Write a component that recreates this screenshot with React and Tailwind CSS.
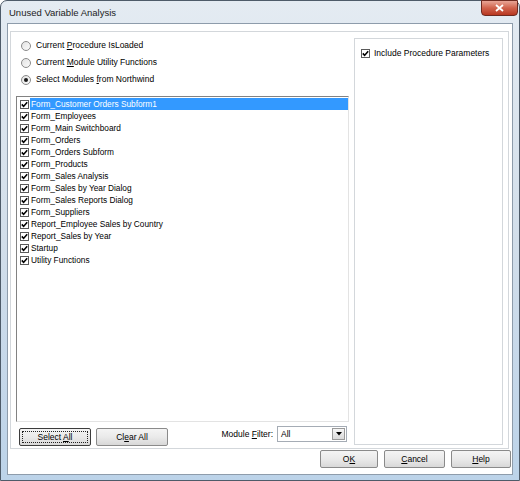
import React from "react";

const modules = [
  "Form_Customer Orders Subform1",
  "Form_Employees",
  "Form_Main Switchboard",
  "Form_Orders",
  "Form_Orders Subform",
  "Form_Products",
  "Form_Sales Analysis",
  "Form_Sales by Year Dialog",
  "Form_Sales Reports Dialog",
  "Form_Suppliers",
  "Report_Employee Sales by Country",
  "Report_Sales by Year",
  "Startup",
  "Utility Functions",
];

function CheckBox({ checked = true }) {
  return (
    <span className="flex w-[9px] h-[9px] shrink-0 items-center justify-center border border-[#5a5a5a] bg-white">
      {checked && (
        <svg width="7" height="7" viewBox="0 0 7 7">
          <polyline points="0.8,3.4 2.6,5.4 6.2,1.2" fill="none" stroke="#000" strokeWidth="1.6" />
        </svg>
      )}
    </span>
  );
}

function Radio({ selected, children }) {
  return (
    <div className="h-[17px] flex items-center gap-[5px]">
      <span className="flex w-[10px] h-[10px] items-center justify-center rounded-full border border-[#8a8a8a] bg-gradient-to-br from-[#e2e2e2] to-[#fbfbfb]">
        {selected && <span className="w-[4px] h-[4px] rounded-full bg-[#1a1a1a]" />}
      </span>
      <span>{children}</span>
    </div>
  );
}

function Button({ children, width, focused }) {
  return (
    <button
      className={`${width} h-[18px] rounded-[2px] border ${
        focused ? "border-[#3c3c3c]" : "border-[#8a8a8a]"
      } bg-gradient-to-b from-[#f4f4f4] via-[#eaeaea] to-[#d8d8d8] p-[2px] text-[8.5px] leading-none`}
    >
      <span
        className={`flex h-full w-full items-center justify-center ${
          focused ? "border border-dotted border-[#222]" : ""
        }`}
      >
        <span>{children}</span>
      </span>
    </button>
  );
}

export default function App() {
  return (
    <div className="w-[520px] h-[481px] font-['Liberation_Sans',Arial,sans-serif] text-[8.5px] text-black">
      <div className="w-full h-full flex flex-col rounded-t-[7px] border border-[#4e5b69] bg-gradient-to-b from-[#e4ebf2] via-[#d2deea] to-[#bcd3e9]">
        {/* Title bar */}
        <div className="h-[22px] flex items-start">
          <span className="pl-[8px] pt-[5px] text-[9.5px] text-[#1c1c1c]">Unused Variable Analysis</span>
          <button className="ml-auto mr-[1px] mt-[-1px] w-[37px] h-[16px] rounded-b-[4px] border border-[#6e2a20] bg-gradient-to-b from-[#e8a596] via-[#d0624c] to-[#b8361f] flex items-center justify-center">
            <svg width="9" height="8" viewBox="0 0 9 8">
              <path d="M1 1L8 7M8 1L1 7" stroke="#fff" strokeWidth="1.8" />
            </svg>
          </button>
        </div>

        {/* Client area */}
        <div className="flex-1 mx-[6px] mb-[5px] bg-white border border-[#8e9cab] flex flex-col">
          <div className="mt-[7px] ml-[2px] w-[499px] h-[418px] border border-[#d3d7db] flex">
            {/* Left column */}
            <div className="w-[343px] pl-[5px] flex flex-col">
              <div className="pt-[5px] pl-[5px]">
                <Radio>
                  Current <u>P</u>rocedure IsLoaded
                </Radio>
                <Radio>
                  Current <u>M</u>odule Utility Functions
                </Radio>
                <Radio selected>
                  Select Modules <u>f</u>rom Northwind
                </Radio>
              </div>

              <div className="mt-[8px] w-[333px] h-[326px] border border-t-[#828282] border-l-[#828282] border-r-[#e3e3e3] border-b-[#e3e3e3] bg-white pt-[1px] text-[8.3px]">
                {modules.map((name, idx) => (
                  <div key={name} className="h-[12px] flex items-center">
                    <span className="w-[13px] pl-[3px] flex">
                      <CheckBox />
                    </span>
                    <span
                      className={`flex-1 h-full flex items-center pl-[1px] ${
                        idx === 0 ? "bg-[#3399ff] text-white" : ""
                      }`}
                    >
                      {name}
                    </span>
                  </div>
                ))}
              </div>

              <div className="mt-[4px] w-[333px] flex items-start pl-[3px] pr-[2px]">
                <div className="mt-[2px] flex gap-[5px]">
                  <Button width="w-[72px]" focused>
                    Select <u>A</u>ll
                  </Button>
                  <Button width="w-[72px]">
                    Cl<u>e</u>ar All
                  </Button>
                </div>
                <div className="ml-auto flex items-center gap-[4px]">
                  <span>
                    Module <u>F</u>ilter:
                  </span>
                  <div className="w-[70px] h-[16px] border border-[#a5acb5] bg-white flex items-center">
                    <span className="flex-1 pl-[3px]">All</span>
                    <span className="w-[13px] h-[12px] mr-[1px] border border-[#9a9a9a] bg-gradient-to-b from-[#f6f6f6] to-[#dadada] flex items-center justify-center">
                      <svg width="6" height="4" viewBox="0 0 6 4">
                        <path d="M0 0H6L3 3.5Z" fill="#000" />
                      </svg>
                    </span>
                  </div>
                </div>
              </div>
            </div>

            {/* Right box */}
            <div className="mt-[6px] w-[149px] h-[407px] border border-[#d3d7db]">
              <div className="pt-[8px] pl-[6px] h-[20px] flex items-center gap-[4px]">
                <CheckBox />
                <span>Include Procedure Parameters</span>
              </div>
            </div>
          </div>

          {/* Dialog buttons */}
          <div className="mt-[1px] flex justify-end gap-[6px] pr-[1px]">
            <Button width="w-[58px]">
              O<u>K</u>
            </Button>
            <Button width="w-[61px]">
              <u>C</u>ancel
            </Button>
            <Button width="w-[60px]">
              <u>H</u>elp
            </Button>
          </div>
        </div>
      </div>
    </div>
  );
}
